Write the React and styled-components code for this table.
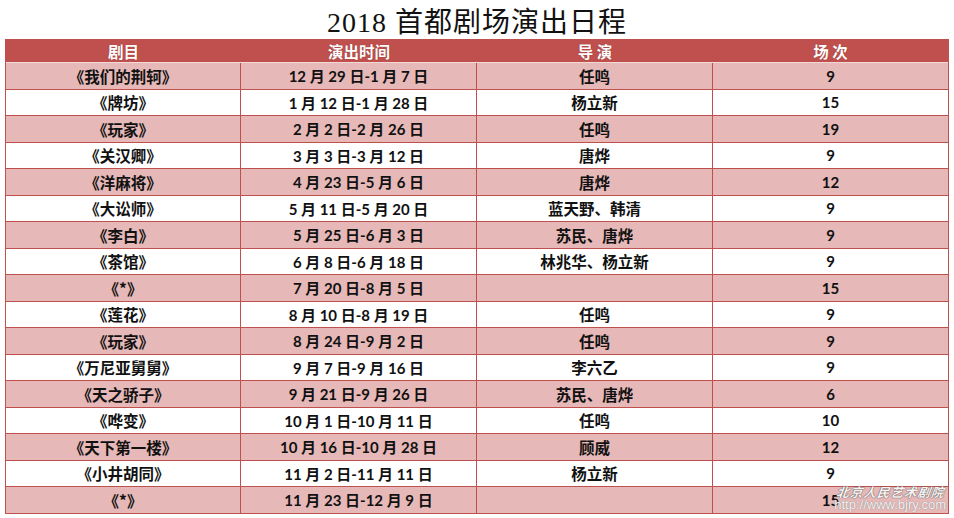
import React from "react";
import styled, { createGlobalStyle } from "styled-components";

const Global = createGlobalStyle`
  html, body { margin: 0; padding: 0; background: #fff; }
  body { width: 954px; height: 518px; overflow: hidden; }
`;

const Page = styled.div`
  position: relative;
  width: 954px;
  height: 518px;
  background: #fff;
  font-family: Lato, "Noto Sans CJK SC", sans-serif;
`;

const Title = styled.h1`
  margin: 0;
  height: 39px;
  display: flex;
  align-items: center;
  justify-content: center;
  box-sizing: border-box;
  font-family: "Liberation Serif", "Noto Sans CJK SC", serif;
  font-weight: 400;
  font-size: 28px;
  letter-spacing: 1px;
  color: #111;
`;

const Table = styled.div`
  margin-left: 5px;
  width: 944px;
  border-left: 1px solid #c0504d;
  border-right: 1px solid #c0504d;
  box-sizing: border-box;
`;

const HeadRow = styled.div`
  display: grid;
  grid-template-columns: 235px 236px 236px 235px;
  height: 24px;
  background: #c0504d;
  border-bottom: 1px solid #f1d9d8;
  box-sizing: border-box;
`;

const HeadCell = styled.div`
  display: flex;
  align-items: center;
  justify-content: center;
  color: #fff;
  font-weight: 700;
  font-size: 15.5px;
  font-family: "Noto Sans CJK SC", sans-serif;
  text-shadow: 0 0 1px rgba(90, 20, 20, 0.6);
`;

const Row = styled.div`
  display: grid;
  grid-template-columns: 235px 236px 236px 235px;
  height: 26.5px;
  background: ${(p) => (p.$pink ? "#e6b8b7" : "#ffffff")};
  border-bottom: 1px solid #c0504d;
  box-sizing: border-box;
`;

const Cell = styled.div`
  display: flex;
  align-items: center;
  justify-content: center;
  border-right: ${(p) => (p.$last ? "none" : "1px solid #c0504d")};
  color: #111;
  font-weight: 700;
  font-size: ${(p) => (p.$num ? "15px" : "15.5px")};
  font-family: ${(p) =>
    p.$num ? 'Lato, "Noto Sans CJK SC", sans-serif' : '"Noto Sans CJK SC", sans-serif'};
  white-space: pre;
`;

const Watermark = styled.div`
  position: absolute;
  left: 834px;
  top: 485px;
  width: 112px;
  display: flex;
  flex-direction: column;
  align-items: flex-end;
  pointer-events: none;
`;

const WmName = styled.span`
  font-family: "Noto Sans CJK SC", sans-serif;
  font-size: 12.5px;
  font-weight: 700;
  letter-spacing: 1px;
  line-height: 13px;
  color: #f8f4f4;
  transform: skewX(-20deg);
  text-shadow: 0 0 1px #555, 0 0 1px #555;
`;

const WmUrl = styled.span`
  font-family: "Liberation Sans", sans-serif;
  font-size: 13px;
  line-height: 13px;
  color: #f6f0f0;
  text-shadow: 0 0 1px #888, 0 0 1px #aaa;
`;

const rows = [
  ["《我们的荆轲》", "12 月 29 日-1 月 7 日", "任鸣", "9"],
  ["《牌坊》", "1 月 12 日-1 月 28 日", "杨立新", "15"],
  ["《玩家》", "2 月 2 日-2 月 26 日", "任鸣", "19"],
  ["《关汉卿》", "3 月 3 日-3 月 12 日", "唐烨", "9"],
  ["《洋麻将》", "4 月 23 日-5 月 6 日", "唐烨", "12"],
  ["《大讼师》", "5 月 11 日-5 月 20 日", "蓝天野、韩清", "9"],
  ["《李白》", "5 月 25 日-6 月 3 日", "苏民、唐烨", "9"],
  ["《茶馆》", "6 月 8 日-6 月 18 日", "林兆华、杨立新", "9"],
  ["《*》", "7 月 20 日-8 月 5 日", "", "15"],
  ["《莲花》", "8 月 10 日-8 月 19 日", "任鸣", "9"],
  ["《玩家》", "8 月 24 日-9 月 2 日", "任鸣", "9"],
  ["《万尼亚舅舅》", "9 月 7 日-9 月 16 日", "李六乙", "9"],
  ["《天之骄子》", "9 月 21 日-9 月 26 日", "苏民、唐烨", "6"],
  ["《哗变》", "10 月 1 日-10 月 11 日", "任鸣", "10"],
  ["《天下第一楼》", "10 月 16 日-10 月 28 日", "顾威", "12"],
  ["《小井胡同》", "11 月 2 日-11 月 11 日", "杨立新", "9"],
  ["《*》", "11 月 23 日-12 月 9 日", "", "15"],
];

export default function App() {
  return (
    <Page>
      <Global />
      <Title>2018 首都剧场演出日程</Title>
      <Table>
        <HeadRow>
          <HeadCell>剧目</HeadCell>
          <HeadCell>演出时间</HeadCell>
          <HeadCell>导 演</HeadCell>
          <HeadCell>场 次</HeadCell>
        </HeadRow>
        {rows.map((r, i) => (
          <Row key={i} $pink={i % 2 === 0}>
            <Cell>{r[0]}</Cell>
            <Cell $num>{r[1]}</Cell>
            <Cell>{r[2]}</Cell>
            <Cell $num $last>{r[3]}</Cell>
          </Row>
        ))}
      </Table>
      <Watermark>
        <WmName>北京人民艺术剧院</WmName>
        <WmUrl>http://www.bjry.com</WmUrl>
      </Watermark>
    </Page>
  );
}
